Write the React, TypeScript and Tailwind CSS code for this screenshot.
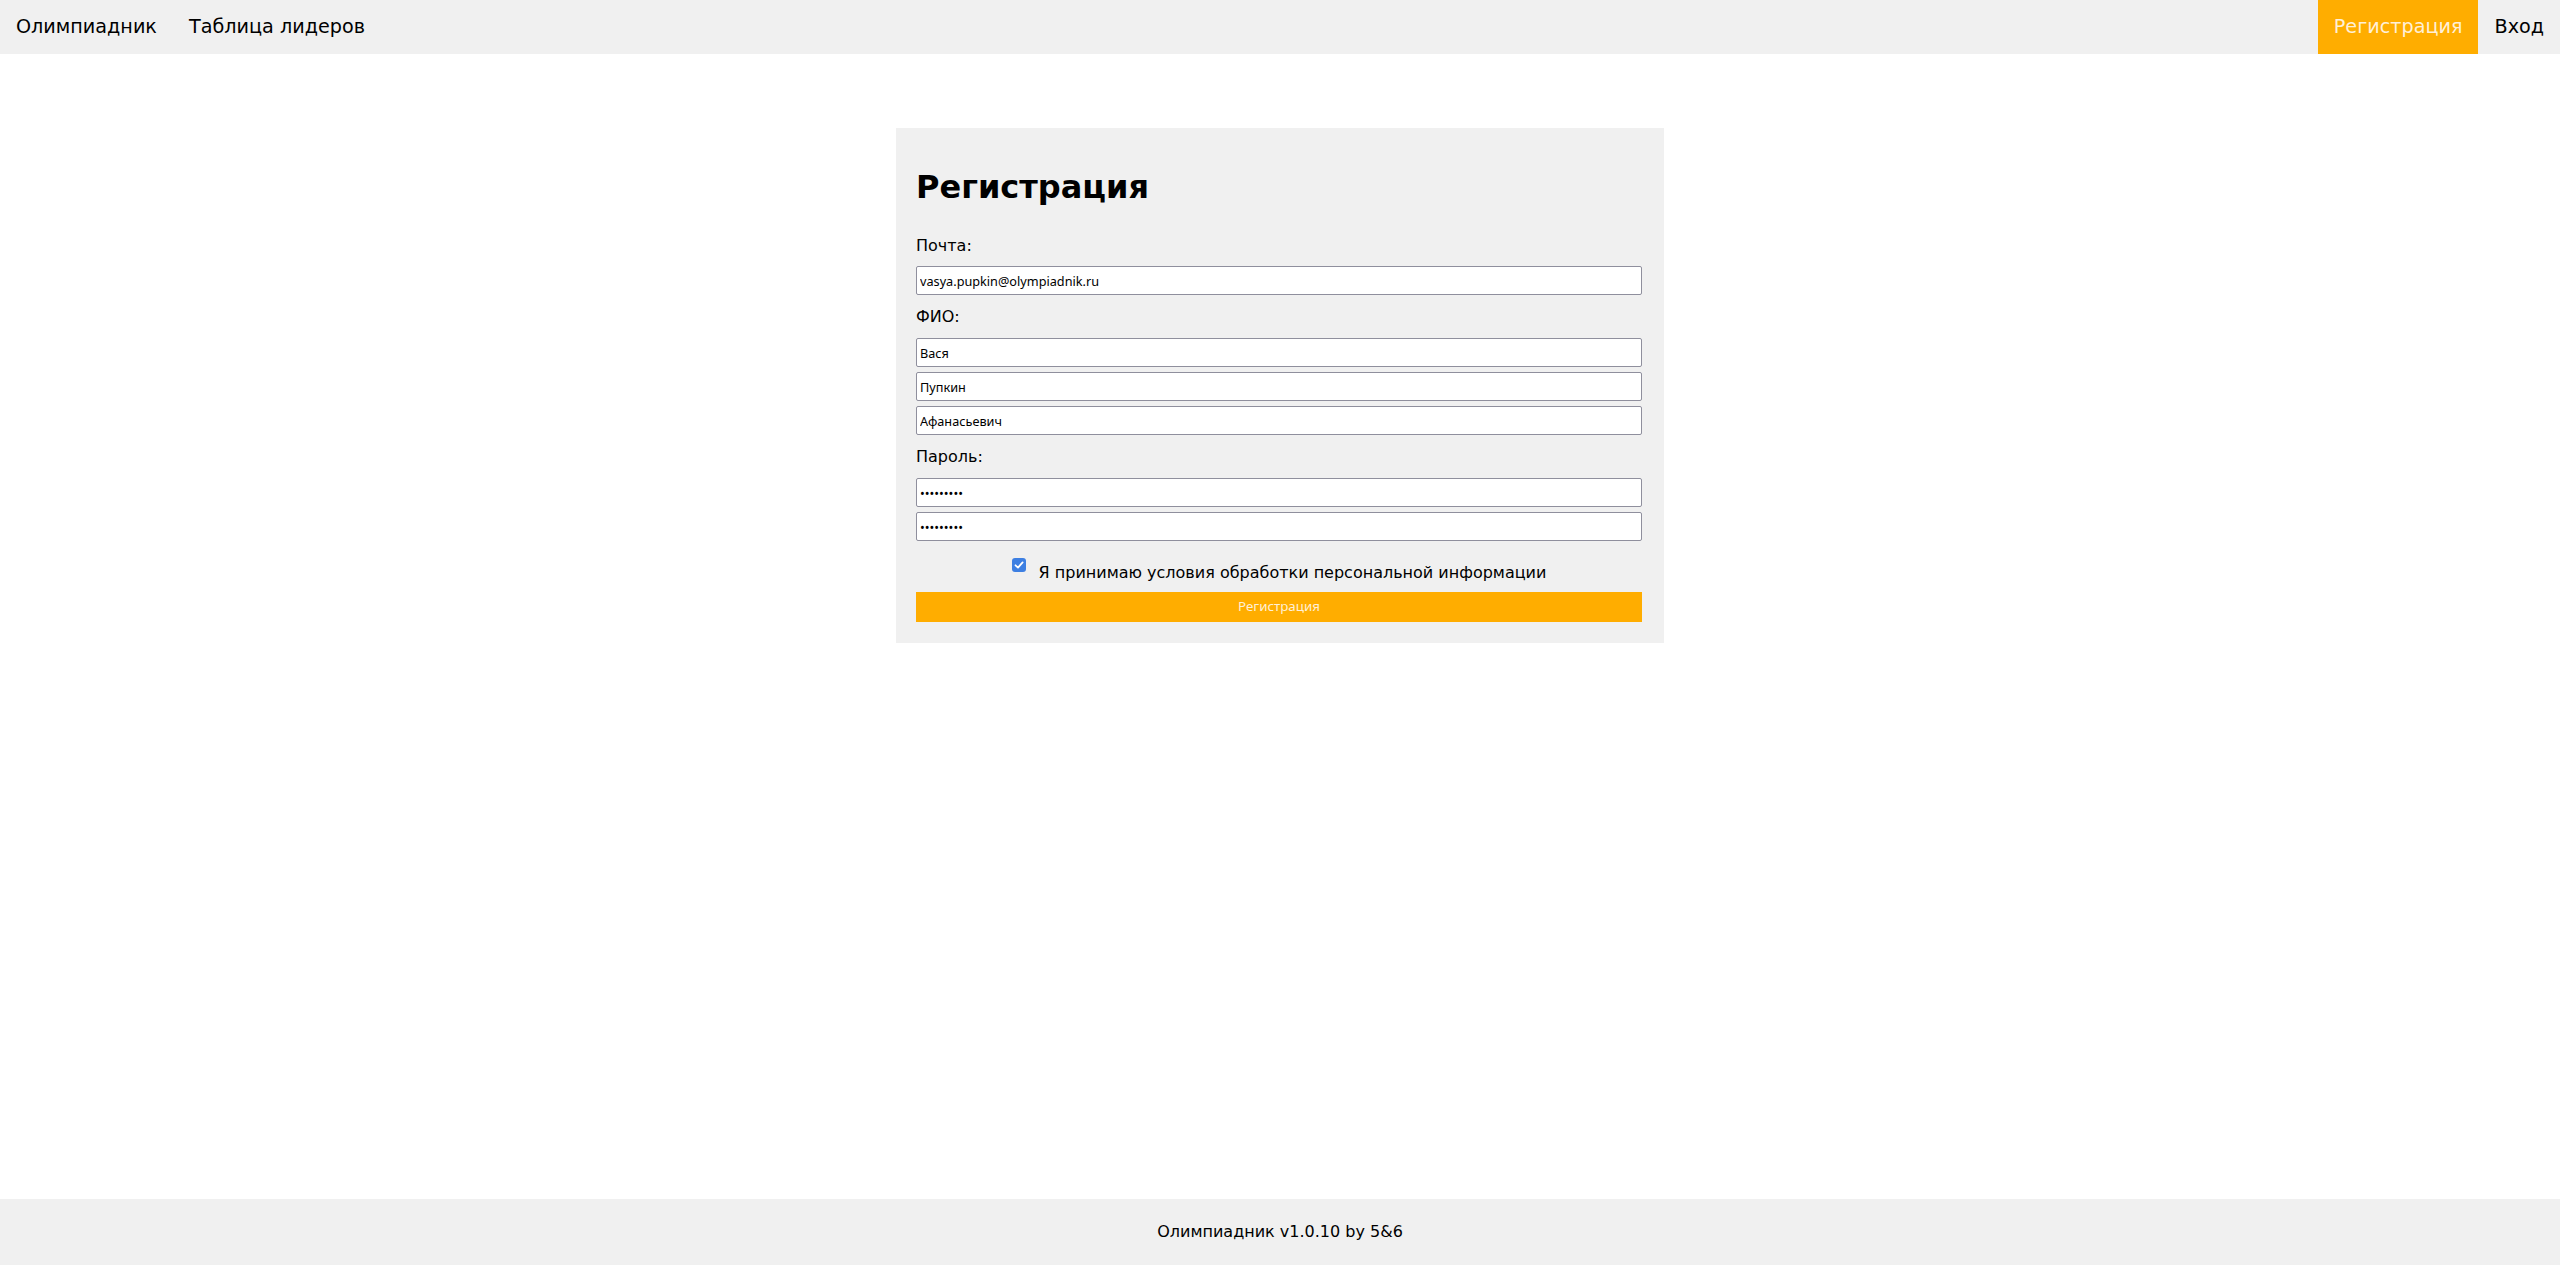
import React from "react"

const navLink = "flex items-center px-4 text-black"
const inputCls =
  "block w-full h-[29px] border border-[#8f8f9d] rounded-[2px] bg-white px-[3px] text-[12.7px] text-black font-['Noto_Sans',sans-serif] outline-none"
const labelCls = "text-[16px] leading-[21px] text-black"

function Field({ value, type = "text", className = "" }: { value: string; type?: string; className?: string }) {
  return <input type={type} defaultValue={value} className={`${inputCls} ${className}`} />
}

function CheckBox() {
  return (
    <span className="flex h-[14px] w-[14px] shrink-0 items-center justify-center rounded-[3px] bg-[#3d7fe2]">
      <svg viewBox="0 0 14 14" className="h-[14px] w-[14px]">
        <path d="M3.5 7.3 L6 9.6 L10.6 4.4" fill="none" stroke="#fff" strokeWidth="1.8" strokeLinecap="round" strokeLinejoin="round" />
      </svg>
    </span>
  )
}

export default function App() {
  return (
    <div className="min-h-screen flex flex-col bg-white font-['DejaVu_Sans',sans-serif]">
      <nav className="h-[54px] bg-[#f0f0f0] flex justify-between text-[19.2px]">
        <div className="flex">
          <a className={navLink}>Олимпиадник</a>
          <a className={navLink}>Таблица лидеров</a>
        </div>
        <div className="flex">
          <a className="flex items-center px-4 bg-[#ffad00] text-[#fff0d8]">Регистрация</a>
          <a className={navLink}>Вход</a>
        </div>
      </nav>

      <main className="flex-1">
        <div className="mx-auto mt-[74px] w-[768px] bg-[#f0f0f0] pl-5 pr-[22px] pt-[38px] pb-[21px]">
          <h1 className="text-[32px] leading-[42px] font-bold text-black">Регистрация</h1>

          <div className={`${labelCls} mt-[27px]`}>Почта:</div>
          <Field value="vasya.pupkin@olympiadnik.ru" className="mt-[10px]" />

          <div className={`${labelCls} mt-[11px]`}>ФИО:</div>
          <Field value="Вася" className="mt-[11px]" />
          <Field value="Пупкин" className="mt-[5px]" />
          <Field value="Афанасьевич" className="mt-[5px]" />

          <div className={`${labelCls} mt-[11px]`}>Пароль:</div>
          <Field value="123456789" type="password" className="mt-[11px]" />
          <Field value="123456789" type="password" className="mt-[5px]" />

          <label className="mt-[17px] flex justify-center items-start gap-[13px]">
            <CheckBox />
            <span className="mt-[4px] text-[16px] leading-[21px] text-black">
              Я принимаю условия обработки персональной информации
            </span>
          </label>

          <button className="mt-[9px] block w-full h-[30px] bg-[#ffad00] text-[#fff0d8] text-[13.33px] font-['Noto_Sans',sans-serif]">
            Регистрация
          </button>
        </div>
      </main>

      <footer className="h-[66px] bg-[#f0f0f0] flex items-center justify-center text-[16px] text-black">
        Олимпиадник v1.0.10 by 5&amp;6
      </footer>
    </div>
  )
}
